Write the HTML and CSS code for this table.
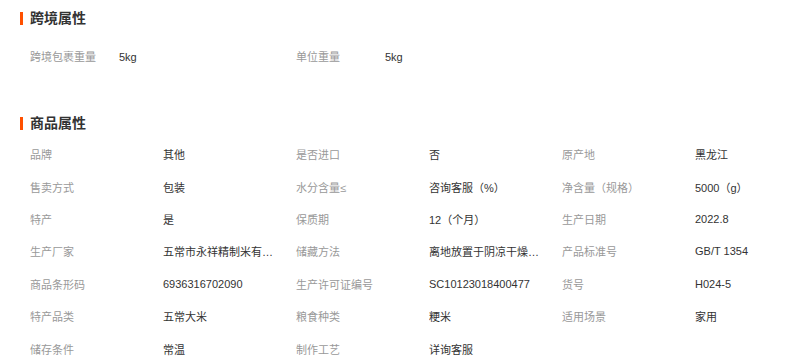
FILE: index.html
```html
<!DOCTYPE html>
<html lang="zh-CN">
<head>
<meta charset="utf-8">
<link rel="stylesheet" href="styles.css">
</head>
<body>
<div class="page">
  <section class="sec sec-cross">
    <h2 class="title">跨境属性</h2>
    <div class="cross-grid">
      <div class="lbl">跨境包裹重量</div><div class="val">5kg</div>
      <div class="lbl">单位重量</div><div class="val">5kg</div>
    </div>
  </section>
  <section class="sec sec-goods">
    <h2 class="title">商品属性</h2>
    <div class="goods-grid">
      <div class="lbl">品牌</div><div class="val">其他</div>
      <div class="lbl">是否进口</div><div class="val">否</div>
      <div class="lbl">原产地</div><div class="val">黑龙江</div>

      <div class="lbl">售卖方式</div><div class="val">包装</div>
      <div class="lbl">水分含量≤</div><div class="val">咨询客服（%）</div>
      <div class="lbl">净含量（规格）</div><div class="val">5000（g）</div>

      <div class="lbl">特产</div><div class="val">是</div>
      <div class="lbl">保质期</div><div class="val">12（个月）</div>
      <div class="lbl">生产日期</div><div class="val">2022.8</div>

      <div class="lbl">生产厂家</div><div class="val" title="五常市永祥精制米有限公司">五常市永祥精制米有限公司</div>
      <div class="lbl">储藏方法</div><div class="val" title="离地放置于阴凉干燥通风处">离地放置于阴凉干燥通风处</div>
      <div class="lbl">产品标准号</div><div class="val">GB/T 1354</div>

      <div class="lbl">商品条形码</div><div class="val">6936316702090</div>
      <div class="lbl">生产许可证编号</div><div class="val">SC10123018400477</div>
      <div class="lbl">货号</div><div class="val">H024-5</div>

      <div class="lbl">特产品类</div><div class="val">五常大米</div>
      <div class="lbl">粮食种类</div><div class="val">粳米</div>
      <div class="lbl">适用场景</div><div class="val">家用</div>

      <div class="lbl">储存条件</div><div class="val">常温</div>
      <div class="lbl">制作工艺</div><div class="val">详询客服</div>
    </div>
  </section>
</div>
</body>
</html>
```
FILE: styles.css
```css
html, body {
  margin: 0;
  padding: 0;
  background: #fff;
}
body {
  font-family: "Liberation Sans", "Noto Sans CJK SC", sans-serif;
  font-size: 11px;
  color: #333;
}
.page {
  padding: 8px 0 0 20px;
}
.title {
  margin: 0;
  font-size: 14px;
  font-weight: bold;
  line-height: 20px;
  color: #333;
  display: flex;
  align-items: center;
  gap: 7px;
}
.title::before {
  content: "";
  width: 3px;
  height: 13px;
  background: #ff5000;
}
.cross-grid {
  margin: 19px 0 0 10px;
  display: grid;
  grid-template-columns: 89px 177px 89px 1fr;
  line-height: 20px;
}
.sec-goods {
  margin-top: 46px;
}
.goods-grid {
  margin: 5px 0 0 10px;
  display: grid;
  grid-template-columns: repeat(6, 133px);
  grid-auto-rows: 32.4px;
  align-items: center;
}
.lbl {
  color: #999;
  white-space: nowrap;
}
.val {
  color: #333;
  white-space: nowrap;
}
.goods-grid .val {
  max-width: 112px;
  overflow: hidden;
  text-overflow: ellipsis;
}
```
